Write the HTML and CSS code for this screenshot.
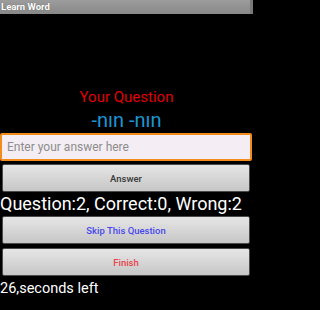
FILE: index.html
```html
<!DOCTYPE html>
<html>
<head>
<meta charset="utf-8">
<link rel="stylesheet" href="styles.css">
</head>
<body>
<div class="screen">
  <div class="titlebar">Learn Word</div>
  <div class="content">
    <div class="prompt">Your Question</div>
    <div class="word">-nın -nın</div>
    <input class="answer-input" type="text" placeholder="Enter your answer here">
    <button class="btn btn-answer">Answer</button>
    <div class="status">Question:2, Correct:0, Wrong:2</div>
    <button class="btn btn-skip">Skip This Question</button>
    <button class="btn btn-finish">Finish</button>
    <div class="timer">26,seconds left</div>
  </div>
</div>
</body>
</html>
```
FILE: styles.css
```css
html, body {
  margin: 0;
  padding: 0;
  background: #000;
  font-family: Roboto, "Noto Sans", sans-serif;
}
.screen {
  width: 253px;
  height: 310px;
  overflow: hidden;
}
.titlebar {
  height: 14px;
  line-height: 14px;
  background: linear-gradient(#9c9c9c, #888888);
  color: #fff;
  font-size: 9.5px;
  font-weight: 700;
  padding-left: 1px;
  text-shadow: 0 0 1px rgba(0,0,0,0.4);
  box-shadow: inset -3px 0 0 #7a7a7a;
}
.content {
  display: flex;
  flex-direction: column;
}
.prompt {
  margin-top: 74px;
  text-align: center;
  color: #e00000;
  font-size: 15px;
  line-height: 19px;
}
.word {
  margin-top: 1px;
  text-align: center;
  color: #1b95d3;
  font-size: 20px;
  line-height: 24px;
}
.answer-input {
  margin: 1px 1px 0 0;
  height: 28px;
  box-sizing: border-box;
  border: 2px solid #f28c1c;
  border-radius: 2px;
  background: #f4eef4;
  padding: 0 5px;
  font-family: Roboto, sans-serif;
  font-size: 12px;
  color: #333;
  outline: none;
}
.answer-input::placeholder {
  color: #8c8c8c;
}
.btn {
  display: block;
  height: 28px;
  box-sizing: border-box;
  margin: 0 3px 0 2px;
  padding: 0;
  border: 1px solid #4a4a4a;
  border-radius: 2px;
  background: linear-gradient(#e6e6e6, #c6c6c6);
  font-family: Roboto, sans-serif;
  font-size: 9.5px;
  font-weight: 500;
  text-align: center;
}
.btn-answer {
  margin-top: 3px;
  color: #3a3a3a;
}
.status {
  height: 24px;
  line-height: 24px;
  color: #fff;
  font-size: 18px;
  white-space: nowrap;
}
.btn-skip {
  color: #4848ee;
}
.btn-finish {
  margin-top: 4px;
  color: #e8444c;
}
.timer {
  margin-top: 1px;
  line-height: 24px;
  color: #fff;
  font-size: 14.5px;
}
```
